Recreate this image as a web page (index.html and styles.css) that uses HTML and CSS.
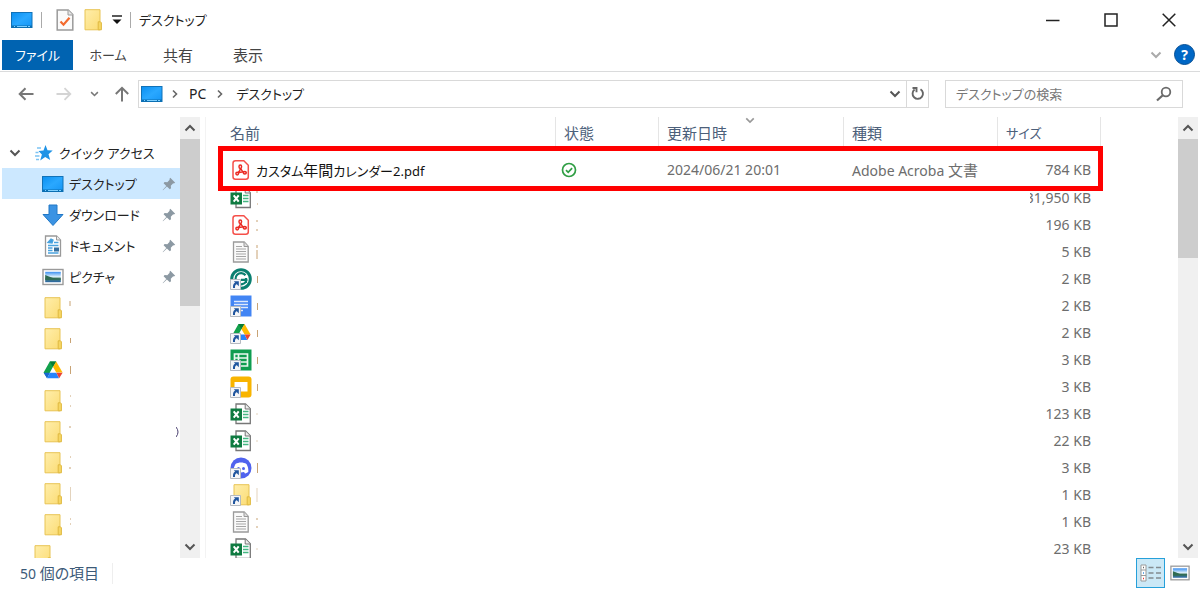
FILE: index.html
```html
<!DOCTYPE html>
<html lang="ja">
<head>
<meta charset="utf-8">
<title>デスクトップ</title>
<link rel="stylesheet" href="styles.css">
</head>
<body>
<svg class="defs" aria-hidden="true">
  <defs>
    <linearGradient id="g-screen" x1="0" y1="0" x2="1" y2="1"><stop offset="0" stop-color="#0a8ff0"/><stop offset=".5" stop-color="#2aa8ff"/><stop offset="1" stop-color="#1495f5"/></linearGradient>
    <linearGradient id="g-folder" x1="0" y1="0" x2="1" y2="1"><stop offset="0" stop-color="#ffeeab"/><stop offset="1" stop-color="#fbdc75"/></linearGradient>
    <linearGradient id="g-photo" x1="0" y1="0" x2="0" y2="1"><stop offset="0" stop-color="#3b8ff0"/><stop offset=".5" stop-color="#e4f4fb"/><stop offset=".6" stop-color="#4c7f6b"/><stop offset="1" stop-color="#2a68a8"/></linearGradient>
  </defs>
  <symbol id="i-desktop" viewBox="0 0 22 18"><rect x=".5" y="1.5" width="20.5" height="15" fill="url(#g-screen)" stroke="#1172b8"/><path d="M1 14.5H21V17H1z" fill="#0b6fb3"/><path d="M3 15.5h1M6 15.5h10M17 15.5h2" stroke="#7fd0ff"/></symbol>
  <symbol id="i-folder" viewBox="0 0 18 22"><path d="M1 .7H16V20.8H1z" fill="url(#g-folder)" stroke="#e8c455"/><path d="M14.2 20.8V12.8h2.2l1 1v7z" fill="#f6d664" stroke="#dfb941"/></symbol>
  <symbol id="i-drive" viewBox="0 0 20 18"><path d="M6.8.5h6.4L10 5.8 4 16.8.6 11.5z" fill="#12a14b"/><path d="M6.8.5h6.4L10 6z" fill="#087b35"/><path d="M13.2.5 19.6 11.5h-6.3L10 6z" fill="#ffba00"/><path d="M.6 11.7h6.3L4 17.2z" fill="#1967d2"/><path d="M6.900 11.700h6.400l2.800 5.600H4z" fill="#2684fc"/><path d="M13.300 11.700h6.300l-3.400 5.600z" fill="#ea4335"/></symbol>
  <symbol id="i-pin" viewBox="0 0 14 14"><path d="M8.3.8 13.2 5.7l-1.4.8-.6-.3-2.4 2.5.2 2.6-1.2 1L4.9 9.5 1 13.2.7 13 4.3 9 1.6 6.2l1-1.2 2.7.2 2.4-2.5-.3-.6z" fill="#8c99a3"/></symbol>
  <symbol id="i-picture" viewBox="0 0 22 17"><rect x="1" y="1" width="20" height="15" fill="#fff" stroke="#9a9a9a" stroke-width="1.4"/><path d="M3.2 3.3h15.6v10.4H3.2z" fill="url(#g-photo)"/><path d="M3.2 6.5 7 8l4 1.5 7.8.5v1.3l-15.6.2z" fill="#2f6b52"/></symbol>
  <symbol id="i-pdf" viewBox="0 0 22 22"><path d="M5.500 1.700h8.300l4.500 4.500v11.600c0 1.600-.9 2.500-2.500 2.500H5.500C3.900 20.300 3 19.400 3 17.800V4.200c0-1.600.9-2.500 2.500-2.500z" fill="#fff" stroke="#f5504a" stroke-width="1.500"/><g fill="none" stroke="#ea2c25" stroke-width="1.500"><ellipse cx="10.300" cy="7.800" rx="1.300" ry="1.700"/><circle cx="7.200" cy="14.600" r="1.300"/><ellipse cx="14.800" cy="13.700" rx="1.500" ry="1.200"/><path d="M10.500 9.500c-.2 1.600-1.200 3-2.500 4.300M10.800 9.400c.6 1.600 1.400 2.700 2.800 3.700M8.300 13.900c1.600-.7 3.200-1 5-.8"/></g></symbol>
  <symbol id="i-excel" viewBox="0 0 22 22"><path d="M6 1h9.500l4.800 4.800V20.500H6z" fill="#fff" stroke="#777" stroke-width="1.300"/><path d="M15.200 1v5h5" fill="#eee" stroke="#777"/><path d="M13 8.500h5.500M13 11.500h5.500M13 14.500h5.500" stroke="#45b883" stroke-width="1.500"/><path d="M.5 5.500h11.500v12H.5z" fill="#0f7b41"/><path d="m3.700 8.300 5 6.400m0-6.400-5 6.400" stroke="#fff" stroke-width="2"/></symbol>
  <symbol id="i-text" viewBox="0 0 18 22"><path d="M1.500 1h10.700l4 4.200V21H1.500z" fill="#fafafa" stroke="#9b9b9b" stroke-width="1.300"/><path d="M12 1v4.500h4.200" fill="#ddd" stroke="#999"/><path d="M4 5.500h6M4 8h10M4 10.500h10M4 13h10M4 15.500h10M4 18h10" stroke="#a6a6a6"/></symbol>
  <symbol id="i-link" viewBox="0 0 22 22"><path d="M.5 11.500h10v10H.5z" fill="#f5f6f8" stroke="#b5bac0"/><path d="M4 20v-1.500c0-1.500.8-2.700 2.500-3.500" fill="none" stroke="#1f559e" stroke-width="2"/><path d="M3.800 13.300h5v5z" fill="#1f559e"/></symbol>
  <symbol id="i-grammar" viewBox="0 0 22 22"><circle cx="11" cy="11" r="9.300" fill="#fff" stroke="#0a7f70" stroke-width="3"/><path d="M15.500 7.200A5.600 5.600 0 1 0 16 13.500M11 11.800h6.500M16 10v5" fill="none" stroke="#0a7f70" stroke-width="2.200"/></symbol>
  <symbol id="i-docs" viewBox="0 0 22 22"><path d="M.5.500h21v21H.5z" fill="#4285f4"/><path d="M4 6.500h14M4 9.500h14M4 12.500h14M4 15.500h9" stroke="#dce8fd" stroke-width="1.500"/></symbol>
  <symbol id="i-sheets" viewBox="0 0 22 22"><path d="M.5.500h21v21H.5z" fill="#0f9d50"/><path d="M4.500 5h13v12h-13zM4.500 9h13M4.500 13h13M8.500 5v12" fill="none" stroke="#e9f7ef" stroke-width="1.700"/></symbol>
  <symbol id="i-slides" viewBox="0 0 22 22"><rect x=".5" y=".5" width="21" height="21" rx="3" fill="#f8b400"/><path d="M4.500 6h13v9.500h-13z" fill="#fff"/></symbol>
  <symbol id="i-discord" viewBox="0 0 22 22"><circle cx="11" cy="11" r="10.500" fill="#5063ee"/><path d="M5.500 7c3-2 8-2 11 0 1.500 2.500 2 5 1.800 8-2 1.500-3.300 1.500-3.300 1.500l-1-1.500c-2 .5-4 .5-6 0l-1 1.500S5.500 16.500 3.700 15c-.2-3 .3-5.500 1.800-8z" fill="#fff"/><circle cx="8.500" cy="11.500" r="1.500" fill="#5063ee"/><circle cx="13.500" cy="11.500" r="1.500" fill="#5063ee"/></symbol>
  <symbol id="i-down" viewBox="0 0 12 8"><path d="m1.500 1.500 4.500 4.500 4.500-4.500" fill="none" stroke="currentColor" stroke-width="2"/></symbol>
  <symbol id="i-up" viewBox="0 0 12 8"><path d="m1.500 6.500 4.500-4.500 4.500 4.500" fill="none" stroke="currentColor" stroke-width="2"/></symbol>
  <symbol id="i-right" viewBox="0 0 8 10"><path d="m2 1.500 3.500 3.500-3.500 3.500" fill="none" stroke="currentColor" stroke-width="1.600"/></symbol>
</svg>

<div class="window">
  <header class="titlebar">
    <svg class="ic-wide"><use href="#i-desktop"/></svg>
    <span class="sep"></span>
    <button class="quick" aria-label="プロパティ"><svg class="ic-file" viewBox="0 0 18 22"><path d="M1.200 1h11l4.600 4.600V21H1.200z" fill="#fafafa" stroke="#9a9a9a" stroke-width="1.500"/><path d="M12 1v5h5" fill="#e5e5e5" stroke="#9a9a9a"/><path d="m4.500 12.500 3 3.200 6-7" fill="none" stroke="#f26a2e" stroke-width="2.200"/></svg></button>
    <button class="quick" aria-label="新しいフォルダー"><svg class="ic-file"><use href="#i-folder"/></svg></button>
    <button class="quick" aria-label="カスタマイズ"><svg class="ic-custom" viewBox="0 0 10 10"><path d="M0 1h10" stroke="#222" stroke-width="1.500"/><path d="M.5 4.500h9L5 9z" fill="#111"/></svg></button>
    <span class="sep"></span>
    <h1 class="title">デスクトップ</h1>
    <div class="caption">
      <button aria-label="最小化"><svg viewBox="0 0 14 14"><path d="M0 7.500h13.500" stroke="#222" stroke-width="1.500"/></svg></button>
      <button aria-label="最大化"><svg viewBox="0 0 14 14"><path d="M1 1h12v12H1z" fill="none" stroke="#222" stroke-width="1.500"/></svg></button>
      <button aria-label="閉じる"><svg viewBox="0 0 14 14"><path d="m.7.7 12.600 12.600m0-12.600L.7 13.300" stroke="#222" stroke-width="1.500"/></svg></button>
    </div>
  </header>

  <nav class="ribbon" aria-label="リボン">
    <button class="tab tab-file">ファイル</button>
    <button class="tab">ホーム</button>
    <button class="tab tab-kanji">共有</button>
    <button class="tab tab-kanji">表示</button>
    <button class="expand" aria-label="リボンの展開"><svg class="ic-chev thin"><use href="#i-down"/></svg></button>
    <button class="help" aria-label="ヘルプ">?</button>
  </nav>

  <div class="toolbar">
    <div class="history">
      <button aria-label="戻る"><svg class="ic-arrow" viewBox="0 0 16 14"><path d="M15.500 7H2M7.500 1.200 1.700 7l5.800 5.800" fill="none" stroke="#777" stroke-width="2"/></svg></button>
      <button aria-label="進む"><svg class="ic-arrow" viewBox="0 0 16 14"><path d="M.5 7H14M8.500 1.200 14.300 7l-5.800 5.800" fill="none" stroke="#d4d4d4" stroke-width="1.800"/></svg></button>
      <button aria-label="最近の場所"><svg class="ic-small"><use href="#i-down"/></svg></button>
      <button aria-label="上へ"><svg class="ic-arrow" viewBox="0 0 16 16"><path d="M8 15.500V2M1.800 8 8 1.800 14.200 8" fill="none" stroke="#777" stroke-width="2"/></svg></button>
    </div>
    <div class="address">
      <svg class="ic-wide"><use href="#i-desktop"/></svg>
      <svg class="ic-right"><use href="#i-right"/></svg>
      <button class="crumb">PC</button>
      <svg class="ic-right"><use href="#i-right"/></svg>
      <button class="crumb kana">デスクトップ</button>
      <button class="drop" aria-label="以前の場所"><svg class="ic-chev"><use href="#i-down"/></svg></button>
      <button class="refresh" aria-label="更新"><svg viewBox="0 0 14 15"><path d="M9.500 3.200A5.200 5.200 0 1 1 3.600 3.500M1.500 2h4v4.200" fill="none" stroke="#666" stroke-width="1.900"/></svg></button>
    </div>
    <label class="search">
      <input type="text" aria-label="検索" placeholder="デスクトップの検索">
      <svg class="ic-search" viewBox="0 0 16 16"><circle cx="10" cy="6" r="4.300" fill="none" stroke="#6a6a6a" stroke-width="1.800"/><path d="M6.800 9.200 1 14.500" stroke="#6a6a6a" stroke-width="2.200"/></svg>
    </label>
  </div>

  <div class="body">
    <aside class="side">
      <ul class="tree">
        <li class="root"><svg class="ic-chev"><use href="#i-down"/></svg><svg class="ic-star" viewBox="0 0 18 18"><path d="m10.500 1 2 5.200 5.200.3-4.200 3.700 1.700 5.800-5-3-5 3.600 1.700-6L3.500 7l5-.5z" fill="#1f93e6"/><path d="M2 4h4M.5 8.500h3M0 12h4.500M1 15.500h3" stroke="#7cc3f3" stroke-width="1.500"/></svg><span>クイック アクセス</span></li>
        <li class="selected"><svg class="ic-wide"><use href="#i-desktop"/></svg><span>デスクトップ</span><svg class="ic-pin"><use href="#i-pin"/></svg></li>
        <li><svg class="ic-node" viewBox="0 0 22 22"><path d="M7 1h8v9.500h6L11 21.500 1 10.500h6z" fill="#3b93e3" stroke="#2278c6"/></svg><span>ダウンロード</span><svg class="ic-pin"><use href="#i-pin"/></svg></li>
        <li><svg class="ic-node" viewBox="0 0 22 22"><path d="M3.500 1h11l4 4v16h-15z" fill="#fff" stroke="#999" stroke-width="1.300"/><path d="M14.500 1v4h4" fill="#eee" stroke="#999"/><path d="M6 7.500 9 4l2 1-1 3zM12 7.500h4.500M6 10.500h10.500M6 13h4.500M6 15.500h4.500M6 18h10.500" fill="#3d9be0" stroke="#4aa3de" stroke-width="1.400"/><path d="M12 12.500h5v4h-5z" fill="#356f9e"/></svg><span>ドキュメント</span><svg class="ic-pin"><use href="#i-pin"/></svg></li>
        <li><svg class="ic-node"><use href="#i-picture"/></svg><span>ピクチャ</span><svg class="ic-pin"><use href="#i-pin"/></svg></li>
        <li><svg class="ic-node"><use href="#i-folder"/></svg><svg class="frag" viewBox="0 0 3 14"><path d="M0 1h2M1 2v3"/></svg></li>
        <li><svg class="ic-node"><use href="#i-folder"/></svg><svg class="frag" viewBox="0 0 3 14"><path d="M1.500 6v5"/></svg></li>
        <li><svg class="ic-node drive"><use href="#i-drive"/></svg><svg class="frag" viewBox="0 0 3 14"><path d="M1.500 3v8"/></svg></li>
        <li><svg class="ic-node"><use href="#i-folder"/></svg><svg class="frag" viewBox="0 0 3 14"><path d="M1 2h1M1 12h1"/></svg></li>
        <li><svg class="ic-node"><use href="#i-folder"/></svg><svg class="frag" viewBox="0 0 3 14"><path d="M0 2h2"/></svg><svg class="frag stray" viewBox="0 0 3 14"><path d="M0 2q4 5 0 10"/></svg></li>
        <li><svg class="ic-node"><use href="#i-folder"/></svg><svg class="frag" viewBox="0 0 3 14"><path d="M1 1h1M0 12h2"/></svg></li>
        <li><svg class="ic-node"><use href="#i-folder"/></svg><svg class="frag pale" viewBox="0 0 3 14"><path d="M1.500 0v14"/></svg></li>
        <li><svg class="ic-node"><use href="#i-folder"/></svg><svg class="frag" viewBox="0 0 3 14"><path d="M1 1h1M1 6h1"/></svg></li>
        <li class="outer"><svg class="ic-node"><use href="#i-folder"/></svg></li>
      </ul>
      <div class="scroll">
        <button aria-label="上へスクロール"><svg class="ic-chev"><use href="#i-up"/></svg></button>
        <div class="track"><div class="thumb thumb-side"></div></div>
        <button aria-label="下へスクロール"><svg class="ic-chev"><use href="#i-down"/></svg></button>
      </div>
    </aside>

    <main class="files">
      <div class="list">
        <table>
          <colgroup><col><col class="c-state"><col class="c-date"><col class="c-type"><col class="c-size"><col class="c-rest"></colgroup>
          <thead><tr>
            <th class="h-name"><div>名前</div></th>
            <th><div>状態</div></th>
            <th><div>更新日時<svg class="sort"><use href="#i-down"/></svg></div></th>
            <th><div>種類</div></th>
            <th><div class="kana">サイズ</div></th>
            <th><div></div></th>
          </tr></thead>
          <tbody>
            <tr class="first"><td class="name"><div><svg><use href="#i-pdf"/></svg><span class="kana">カスタム<span class="kanji">年間</span>カレンダー2.pdf</span></div></td><td class="state"><svg viewBox="0 0 16 16" role="img" aria-label="同期済み"><circle cx="8" cy="8" r="6.500" fill="none" stroke="#2f9e44" stroke-width="1.700"/><path d="m5 8.200 2.200 2.100 3.900-4.200" fill="none" stroke="#2f9e44" stroke-width="1.700"/></svg></td><td>2024/06/21 20:01</td><td>Adobe Acroba <span class="kanji">文書</span></td><td class="size">784 KB</td><td></td></tr>
            <tr><td class="name"><div><svg><use href="#i-excel"/></svg><svg class="frag" viewBox="0 0 3 14"><path d="M0 1h2M1 13h1"/></svg></div></td><td></td><td></td><td></td><td class="size"><span class="cut">31,950 KB</span></td><td></td></tr>
            <tr><td class="name"><div><svg><use href="#i-pdf"/></svg><svg class="frag" viewBox="0 0 3 14"><path d="M0 3h2M0 12h2"/></svg></div></td><td></td><td></td><td></td><td class="size">196 KB</td><td></td></tr>
            <tr><td class="name"><div><svg><use href="#i-text"/></svg><svg class="frag" viewBox="0 0 3 14"><path d="M1 0v3M1 5v9"/></svg></div></td><td></td><td></td><td></td><td class="size">5 KB</td><td></td></tr>
            <tr><td class="name"><div><svg viewBox="0 0 22 22"><use href="#i-grammar"/><use href="#i-link"/></svg><svg class="frag" viewBox="0 0 3 14"><path d="M1.500 4v7"/></svg></div></td><td></td><td></td><td></td><td class="size">2 KB</td><td></td></tr>
            <tr><td class="name"><div><svg viewBox="0 0 22 22"><use href="#i-docs"/><use href="#i-link"/></svg><svg class="frag" viewBox="0 0 3 14"><path d="M1.500 4v7"/></svg></div></td><td></td><td></td><td></td><td class="size">2 KB</td><td></td></tr>
            <tr><td class="name"><div><svg viewBox="0 0 22 22"><use href="#i-drive" x="2" y="1" width="19" height="18"/><use href="#i-link"/></svg><svg class="frag" viewBox="0 0 3 14"><path d="M1.500 4v7"/></svg></div></td><td></td><td></td><td></td><td class="size">2 KB</td><td></td></tr>
            <tr><td class="name"><div><svg viewBox="0 0 22 22"><use href="#i-sheets"/><use href="#i-link"/></svg><svg class="frag" viewBox="0 0 3 14"><path d="M1.500 4v7"/></svg></div></td><td></td><td></td><td></td><td class="size">3 KB</td><td></td></tr>
            <tr><td class="name"><div><svg viewBox="0 0 22 22"><use href="#i-slides"/><use href="#i-link"/></svg><svg class="frag" viewBox="0 0 3 14"><path d="M1.500 4v7"/></svg></div></td><td></td><td></td><td></td><td class="size">3 KB</td><td></td></tr>
            <tr><td class="name"><div><svg><use href="#i-excel"/></svg><svg class="frag pale" viewBox="0 0 3 14"><path d="M0 7h2"/></svg></div></td><td></td><td></td><td></td><td class="size">123 KB</td><td></td></tr>
            <tr><td class="name"><div><svg><use href="#i-excel"/></svg><svg class="frag pale" viewBox="0 0 3 14"><path d="M0 7h2"/></svg></div></td><td></td><td></td><td></td><td class="size">22 KB</td><td></td></tr>
            <tr><td class="name"><div><svg viewBox="0 0 22 22"><use href="#i-discord"/><use href="#i-link"/></svg><svg class="frag" viewBox="0 0 3 14"><path d="M1.500 2v10"/></svg></div></td><td></td><td></td><td></td><td class="size">3 KB</td><td></td></tr>
            <tr><td class="name"><div><svg viewBox="0 0 22 22"><use href="#i-folder" x="2" width="20"/><use href="#i-link"/></svg><svg class="frag pale" viewBox="0 0 3 14"><path d="M1 0v14"/></svg></div></td><td></td><td></td><td></td><td class="size">1 KB</td><td></td></tr>
            <tr><td class="name"><div><svg><use href="#i-text"/></svg><svg class="frag" viewBox="0 0 3 14"><path d="M0 4h2M0 12h2"/></svg></div></td><td></td><td></td><td></td><td class="size">1 KB</td><td></td></tr>
            <tr><td class="name"><div><svg><use href="#i-excel"/></svg><svg class="frag pale" viewBox="0 0 3 14"><path d="M0 7h2"/></svg></div></td><td></td><td></td><td></td><td class="size">23 KB</td><td></td></tr>
          </tbody>
        </table>
        <div class="highlight"></div>
      </div>
      <div class="scroll">
        <button aria-label="上へスクロール"><svg class="ic-chev"><use href="#i-up"/></svg></button>
        <div class="track"><div class="thumb thumb-main"></div></div>
        <button aria-label="下へスクロール"><svg class="ic-chev"><use href="#i-down"/></svg></button>
      </div>
    </main>
  </div>

  <footer class="status">
    <span class="count">50 <span class="kanji">個の項目</span></span>
    <div class="views">
      <button class="view active" aria-label="詳細"><svg width="22" height="18" viewBox="0 0 22 18"><path d="M1 1h5v16H1zM1 6h5M1 11.500h5" fill="#fff" stroke="#999"/><path d="M3 3.500h1" stroke="#666" stroke-width="1.500"/><path d="M3 9h1" stroke="#3b8fe0" stroke-width="1.500"/><path d="M3 14.500h1" stroke="#e33" stroke-width="1.500"/><path d="M8.500 3.500h5M16 3.500h5M8.500 9h5M16 9h5M8.500 14h5M16 14h5" stroke="#848b90" stroke-width="1.500"/></svg></button>
      <button class="view" aria-label="大アイコン"><svg width="20" height="16"><use href="#i-picture"/></svg></button>
    </div>
  </footer>
</div>
</body>
</html>
```
FILE: styles.css
```css
* { box-sizing: border-box; }

body {
  margin: 0;
  background: #fff;
  color: #222;
  font: 14px/20px "Noto Sans", "Noto Sans CJK JP", sans-serif;
  font-feature-settings: "palt";
}

button {
  margin: 0;
  padding: 0;
  border: 0;
  background: none;
  color: inherit;
  font: inherit;
  font-feature-settings: inherit;
  display: flex;
  align-items: center;
  justify-content: center;
}

svg { display: block; flex: none; }
.defs { position: absolute; width: 0; height: 0; }

.ic-wide { width: 22px; height: 18px; }
.ic-file { width: 18px; height: 22px; }
.ic-custom { width: 10px; height: 10px; }
.ic-chev { width: 12px; height: 8px; color: #555; }
.ic-chev.thin { color: #aaa; }
.ic-small { width: 9px; height: 6px; color: #777; }
.ic-arrow { width: 16px; height: 16px; }
.ic-right { width: 8px; height: 10px; color: #666; }
.ic-search { width: 16px; height: 16px; }
.ic-star { width: 18px; height: 18px; }
.ic-node { width: 22px; height: 22px; }
.ic-node.drive { height: 18px; }
.ic-pin { width: 14px; height: 14px; margin-left: auto; }
.frag { width: 3px; height: 14px; fill: none; stroke: #c8a375; }
.frag.pale { stroke: #e3d3bd; }
.kana { font-size: 13px; }
.kanji { font-size: 15px; }

.window {
  display: flex;
  flex-direction: column;
  height: 100vh;
}

.titlebar {
  display: flex;
  align-items: center;
  height: 40px;
  padding: 0 0 1px 11px;
}
.sep { width: 1px; height: 16px; margin: 0 8px; background: #aaa; }
.quick { margin-left: 10px; }
.titlebar .sep + .quick { margin-left: 6px; }
.title { margin: 0; font-size: 13px; font-weight: 400; line-height: 20px; }
.caption { display: flex; margin-left: auto; padding-right: 2px; }
.caption button { width: 58px; height: 38px; }
.caption svg { width: 14px; height: 14px; }

.ribbon {
  display: flex;
  align-items: center;
  height: 32px;
  padding: 0 5px 2px 2px;
  border-bottom: 1px solid #dadbdc;
}
.tab { width: 70px; height: 30px; color: #444; font-size: 13px; }
.tab-file { width: 71px; background: #0063b1; color: #fff; }
.tab-kanji { font-size: 15px; }
.expand { width: 20px; height: 24px; margin-left: auto; margin-right: 8px; }
.help {
  width: 21px;
  height: 21px;
  border: 1px solid #064f94;
  border-radius: 50%;
  background: #0067c5;
  color: #fff;
  font-weight: 700;
}

.toolbar {
  display: flex;
  align-items: center;
  gap: 16px;
  height: 45px;
  padding: 0 17px 2px 18px;
}
.history { display: grid; grid-template-columns: 38px 34px 24px 16px; margin-right: -8px; }
.history button { justify-content: flex-start; }
.address {
  display: flex;
  align-items: center;
  flex: 1;
  height: 28px;
  padding-left: 2px;
  border: 1px solid #d9d9d9;
}
.address .ic-right { margin: 0 10px 0 8px; }
.address .crumb + .ic-right { margin: 0 12px 0 10px; }
.drop { width: 22px; height: 26px; margin-left: auto; }
.refresh { width: 22px; height: 26px; border-left: 1px solid #d9d9d9; }
.refresh svg { width: 14px; height: 15px; }
.search {
  display: flex;
  align-items: center;
  width: 238px;
  height: 28px;
  padding: 0 10px;
  border: 1px solid #d9d9d9;
}
.search input {
  flex: 1;
  min-width: 0;
  padding: 0;
  border: 0;
  outline: 0;
  background: none;
  font: inherit;
  font-size: 13px;
  font-feature-settings: inherit;
}
.search input::placeholder { color: #777; opacity: 1; }

.body { display: flex; flex: 1; min-height: 0; }
.side {
  display: flex;
  width: 206px;
  padding-right: 5px;
  border-right: 1px solid #f3f3f3;
}
.tree {
  flex: 1;
  margin: 0;
  padding: 20px 0 0 2px;
  list-style: none;
  overflow: hidden;
  font-size: 13px;
}
.tree li {
  display: flex;
  align-items: center;
  gap: 5px;
  height: 31px;
  padding: 0 4px 0 40px;
}
.tree .root { gap: 6px; padding-left: 7px; }
.tree .ic-star { margin-left: 8px; }
.tree .selected { background: #cce8ff; }
.tree .outer { padding-left: 30px; }
.tree .frag.stray { margin-left: auto; margin-right: -3px; stroke: #4a4070; }

.scroll {
  display: flex;
  flex-direction: column;
  width: 20px;
  background: #f0f0f0;
}
.scroll button { height: 22px; }
.track { flex: 1; }
.thumb { background: #cdcdcd; }
.thumb-side { height: 42%; }
.thumb-main { height: 30%; }

.files { display: flex; flex: 1; min-width: 0; padding-right: 2px; }
.list { position: relative; flex: 1; min-width: 0; overflow: hidden; }

table { width: 100%; table-layout: fixed; border-collapse: collapse; }
.c-state { width: 103px; }
.c-date { width: 185px; }
.c-type { width: 154px; }
.c-size { width: 103px; }
.c-rest { width: 78px; }

th { height: 39px; padding: 0; vertical-align: top; font-size: 15px; font-weight: 400; text-align: left; color: #4c607a; }
th div { height: 32px; padding-left: 8px; border-left: 1px solid #e5e5e5; line-height: 32px; position: relative; }
th .kana { font-size: 13px; }
.h-name div { padding-left: 24px; border-left: 0; }
.sort { position: absolute; top: 0; left: 47%; width: 10px; height: 7px; color: #999; }

td { height: 27px; padding: 0 0 0 9px; color: #6d6d6d; white-space: nowrap; }
.first td { height: 28px; }
.name { padding-left: 24px; color: #111; }
.name div { display: flex; align-items: center; gap: 4px; }
.name svg:first-child { width: 22px; height: 22px; }
.state svg { width: 16px; height: 16px; margin-left: -3px; }
td.size { padding-right: 9px; text-align: right; }
.cut { display: flex; justify-content: flex-end; width: 61px; margin-left: auto; overflow: hidden; }

.highlight {
  position: absolute;
  top: 29px;
  left: 12px;
  right: 75px;
  height: 45px;
  border: 5px solid #f00;
}

.status { display: flex; align-items: flex-start; height: 31px; padding: 0 6px 0 20px; }
.count { margin-top: 5px; padding-right: 13px; border-right: 1px solid #eee; color: #3c5a78; }
.views { display: flex; margin-left: auto; }
.view { width: 29px; height: 30px; }
.view.active { border: 1px solid #26a0da; background: #cbe8f6; }
```
